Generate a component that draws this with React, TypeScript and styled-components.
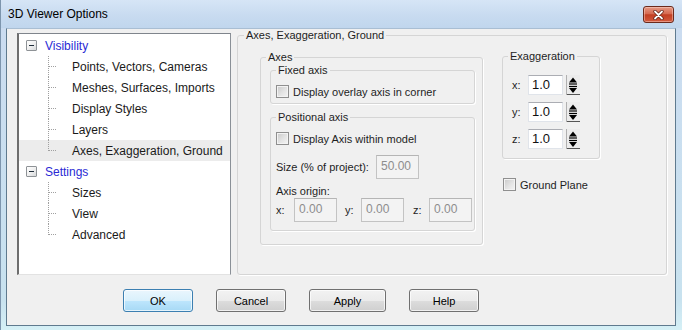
import React from 'react';
import styled, { createGlobalStyle } from 'styled-components';

const GlobalStyle = createGlobalStyle`
  html, body {
    margin: 0;
    padding: 0;
    background: #ffffff;
  }
  body {
    font-family: "Liberation Sans", Arial, sans-serif;
    color: #1e1e1e;
  }
`;

const Window = styled.div`
  width: 682px;
  height: 330px;
  box-sizing: border-box;
  display: flex;
  flex-direction: column;
  overflow: hidden;
  background: linear-gradient(180deg, #c3d7ee 0px, #cbdcf0 28px, #c8e2ef 300px, #d5f0f6 330px);
  border-left: 1px solid #7d95ad;
`;

const TitleBar = styled.div`
  height: 28px;
  flex: none;
  display: flex;
  align-items: flex-start;
  justify-content: space-between;
  padding: 0 8px 0 7px;
  background: linear-gradient(180deg, #d6e5f6 0%, #c8dbf0 55%, #c0d6ed 100%);
`;

const Title = styled.div`
  font-size: 12px;
  line-height: 14px;
  margin-top: 7px;
  color: #000;
`;

const CloseButton = styled.div`
  width: 31px;
  height: 17px;
  margin-top: 6px;
  box-sizing: border-box;
  border: 1px solid #6b2a1c;
  border-radius: 3px;
  display: flex;
  align-items: center;
  justify-content: center;
  background: linear-gradient(180deg, #e59a85 0%, #d66a51 45%, #c23f23 52%, #d35a3e 100%);
  box-shadow: inset 0 0 0 1px rgba(255, 220, 210, 0.45);
`;

const Client = styled.div`
  margin-left: 5px;
  width: 670px;
  height: 298px;
  box-sizing: border-box;
  background: #f0f0f0;
  border: 1px solid #5f7a8e;
  border-top: 1px solid #a9bed3;
  display: flex;
  flex-direction: column;
  padding: 0 0 0 10px;
`;

const Main = styled.div`
  display: flex;
  align-items: flex-start;
  gap: 6px;
`;

const Tree = styled.div`
  width: 214px;
  height: 242px;
  margin-top: 4px;
  box-sizing: border-box;
  background: #ffffff;
  border-top: 1px solid #7f858c;
  border-left: 2px solid #6e6e6e;
  border-right: 1px solid #8a9097;
  border-bottom: 1px solid #e2e2e2;
  padding-top: 1px;
  font-size: 12px;
`;

const TreeRow = styled.div<{ $child?: boolean; $selected?: boolean }>`
  height: 21px;
  display: flex;
  align-items: center;
  padding-left: ${(p) => (p.$child ? 25 : 7)}px;
  background: ${(p) => (p.$selected ? '#ececec' : 'transparent')};
`;

const ExpandBox = styled.div`
  width: 11px;
  height: 11px;
  box-sizing: border-box;
  border: 1px solid #8e9296;
  border-radius: 1px;
  background: linear-gradient(135deg, #ffffff 0%, #f0f0f0 50%, #d6d8da 100%);
  display: flex;
  align-items: center;
  justify-content: center;
  &::after {
    content: '';
    width: 5px;
    height: 1px;
    background: #1f2d3a;
  }
`;

const TreeLabel = styled.span<{ $parent?: boolean }>`
  margin-left: ${(p) => (p.$parent ? 8 : 16)}px;
  color: ${(p) => (p.$parent ? '#2a2ad4' : '#1a1a1a')};
  white-space: nowrap;
`;

const Group = styled.fieldset<{ $w: number; $h: number }>`
  margin: 0;
  padding: 0;
  min-width: 0;
  width: ${(p) => p.$w}px;
  height: ${(p) => p.$h}px;
  box-sizing: border-box;
  border: 1px solid #d5d5d5;
  border-radius: 3px;
  box-shadow: 1px 1px 0 #ffffff;
  font-size: 11px;
`;

const Legend = styled.legend<{ $x: number }>`
  margin-left: ${(p) => p.$x}px;
  padding: 0 2px;
  line-height: 13px;
  font-size: 11px;
  color: #1e1e1e;
`;

const GroupBody = styled.div<{ $pad: string }>`
  padding: ${(p) => p.$pad};
  display: flex;
  flex-direction: column;
`;

const PanelRow = styled.div`
  display: flex;
  align-items: flex-start;
`;

const RightColumn = styled.div`
  margin-left: 19px;
  margin-top: -1px;
  display: flex;
  flex-direction: column;
`;

const CheckRow = styled.label<{ $mt?: number; $ml?: number }>`
  display: flex;
  align-items: center;
  height: 13px;
  margin-top: ${(p) => p.$mt ?? 0}px;
  margin-left: ${(p) => p.$ml ?? 0}px;
  font-size: 11px;
  color: #1e1e1e;
`;

const CheckBox = styled.span`
  width: 13px;
  height: 13px;
  flex: none;
  box-sizing: border-box;
  border: 1px solid #8f8f8f;
  background: linear-gradient(135deg, #c9c9c9 0%, #e4e4e4 55%, #f4f4f4 100%);
  box-shadow: inset 0 0 0 1px #f3f3f3;
  margin-right: 4px;
`;

const FieldRow = styled.div<{ $mt?: number }>`
  display: flex;
  align-items: center;
  margin-top: ${(p) => p.$mt ?? 0}px;
`;

const FieldLabel = styled.span<{ $w?: number }>`
  width: ${(p) => (p.$w ? `${p.$w}px` : 'auto')};
  flex: none;
  font-size: 11px;
  line-height: 14px;
  color: #1e1e1e;
  white-space: nowrap;
`;

const DisabledInput = styled.div<{ $mr?: number }>`
  width: 43px;
  height: 24px;
  flex: none;
  box-sizing: border-box;
  margin-right: ${(p) => p.$mr ?? 0}px;
  border: 1px solid #c3c3c3;
  border-top-color: #b5b5b5;
  background: #f3f3f3;
  color: #8d8d8d;
  font-size: 12px;
  line-height: 14px;
  padding: 3px 0 0 4px;
`;

const SpinRow = styled.div<{ $mt?: number }>`
  display: flex;
  align-items: center;
  height: 20px;
  margin-top: ${(p) => p.$mt ?? 0}px;
`;

const SpinInput = styled.div`
  width: 35px;
  height: 20px;
  box-sizing: border-box;
  border: 1px solid #e0e4ea;
  border-top-color: #abadb3;
  background: #ffffff;
  color: #111;
  font-size: 13px;
  line-height: 18px;
  padding-left: 3px;
  margin-right: 3px;
`;

const ButtonRow = styled.div`
  display: flex;
  gap: 23px;
  margin-top: 14px;
  margin-left: 106px;
`;

const Button = styled.button<{ $w: number; $default?: boolean }>`
  width: ${(p) => p.$w}px;
  height: 23px;
  box-sizing: border-box;
  padding: 0;
  font-family: "Liberation Sans", Arial, sans-serif;
  font-size: 11px;
  color: #000;
  border-radius: 3px;
  border: 1px solid ${(p) => (p.$default ? '#3c7fb1' : '#707070')};
  background: ${(p) =>
    p.$default
      ? 'linear-gradient(180deg, #eaf6fd 0%, #d9f0fc 50%, #bee6fd 51%, #a7d9f5 100%)'
      : 'linear-gradient(180deg, #f2f2f2 0%, #ebebeb 50%, #dddddd 51%, #cfcfcf 100%)'};
  box-shadow: inset 0 0 0 1px rgba(255, 255, 255, 0.7);
`;

function Connector({ last }: { last?: boolean }) {
  return (
    <svg width="12" height="21" viewBox="0 0 12 21" style={{ flex: 'none' }}>
      <line
        x1="4.5"
        y1="0"
        x2="4.5"
        y2={last ? 11 : 21}
        stroke="#a0a0a0"
        strokeWidth="1"
        strokeDasharray="1 1"
      />
      <line x1="5" y1="10.5" x2="12" y2="10.5" stroke="#a0a0a0" strokeWidth="1" strokeDasharray="1 1" />
    </svg>
  );
}

function Spinner() {
  return (
    <svg width="14" height="20" viewBox="0 0 14 20">
      <rect x="0" y="0" width="14" height="20" fill="#ececec" />
      <line x1="0.5" y1="0" x2="0.5" y2="20" stroke="#b0b0b0" />
      <polygon points="3,7.5 7,2.5 11,7.5" fill="#000" />
      <line x1="3" y1="9" x2="11" y2="9" stroke="#000" strokeWidth="1.2" />
      <line x1="3" y1="11.5" x2="11" y2="11.5" stroke="#000" strokeWidth="1.2" />
      <polygon points="3,13 7,18 11,13" fill="#000" />
      <line x1="1" y1="19.5" x2="14" y2="19.5" stroke="#555" />
    </svg>
  );
}

const visibilityItems = [
  'Points, Vectors, Cameras',
  'Meshes, Surfaces, Imports',
  'Display Styles',
  'Layers',
  'Axes, Exaggeration, Ground',
];
const settingsItems = ['Sizes', 'View', 'Advanced'];

export default function App() {
  return (
    <>
      <GlobalStyle />
      <Window>
        <TitleBar>
          <Title>3D Viewer Options</Title>
          <CloseButton>
            <svg width="11" height="10" viewBox="0 0 11 10">
              <path d="M2 1.5 L9 8.5 M9 1.5 L2 8.5" stroke="#5a1c10" strokeWidth="3.2" strokeLinecap="round" />
              <path d="M2 1.5 L9 8.5 M9 1.5 L2 8.5" stroke="#ffffff" strokeWidth="1.8" strokeLinecap="round" />
            </svg>
          </CloseButton>
        </TitleBar>
        <Client>
          <Main>
            <Tree>
              <TreeRow>
                <ExpandBox />
                <TreeLabel $parent>Visibility</TreeLabel>
              </TreeRow>
              {visibilityItems.map((item, i) => (
                <TreeRow key={item} $child $selected={item === 'Axes, Exaggeration, Ground'}>
                  <Connector last={i === visibilityItems.length - 1} />
                  <TreeLabel>{item}</TreeLabel>
                </TreeRow>
              ))}
              <TreeRow>
                <ExpandBox />
                <TreeLabel $parent>Settings</TreeLabel>
              </TreeRow>
              {settingsItems.map((item, i) => (
                <TreeRow key={item} $child>
                  <Connector last={i === settingsItems.length - 1} />
                  <TreeLabel>{item}</TreeLabel>
                </TreeRow>
              ))}
            </Tree>

            <Group $w={430} $h={246}>
              <Legend $x={6}>Axes, Exaggeration, Ground</Legend>
              <GroupBody $pad="9px 0 0 22px">
                <PanelRow>
                  <Group $w={223} $h={194}>
                    <Legend $x={5}>Axes</Legend>
                    <GroupBody $pad="0 7px 0 9px">
                      <Group $w={205} $h={40}>
                        <Legend $x={5}>Fixed axis</Legend>
                        <GroupBody $pad="8px 0 0 5px">
                          <CheckRow>
                            <CheckBox />
                            Display overlay axis in corner
                          </CheckRow>
                        </GroupBody>
                      </Group>
                      <div style={{ height: 7 }} />
                      <Group $w={205} $h={120}>
                        <Legend $x={5}>Positional axis</Legend>
                        <GroupBody $pad="8px 0 0 5px">
                          <CheckRow>
                            <CheckBox />
                            Display Axis within model
                          </CheckRow>
                          <FieldRow $mt={10}>
                            <FieldLabel $w={100}>Size (% of project):</FieldLabel>
                            <DisabledInput>50.00</DisabledInput>
                          </FieldRow>
                          <FieldRow $mt={5}>
                            <FieldLabel>Axis origin:</FieldLabel>
                          </FieldRow>
                          <FieldRow>
                            <FieldLabel $w={18}>x:</FieldLabel>
                            <DisabledInput $mr={8}>0.00</DisabledInput>
                            <FieldLabel $w={16}>y:</FieldLabel>
                            <DisabledInput $mr={9}>0.00</DisabledInput>
                            <FieldLabel $w={16}>z:</FieldLabel>
                            <DisabledInput>0.00</DisabledInput>
                          </FieldRow>
                        </GroupBody>
                      </Group>
                    </GroupBody>
                  </Group>

                  <RightColumn>
                    <Group $w={98} $h={109}>
                      <Legend $x={5}>Exaggeration</Legend>
                      <GroupBody $pad="12px 0 0 9px">
                        {['x:', 'y:', 'z:'].map((axis, i) => (
                          <SpinRow key={axis} $mt={i === 0 ? 0 : 7}>
                            <FieldLabel $w={16}>{axis}</FieldLabel>
                            <SpinInput>1.0</SpinInput>
                            <Spinner />
                          </SpinRow>
                        ))}
                      </GroupBody>
                    </Group>
                    <CheckRow $mt={19} $ml={1}>
                      <CheckBox />
                      Ground Plane
                    </CheckRow>
                  </RightColumn>
                </PanelRow>
              </GroupBody>
            </Group>
          </Main>

          <ButtonRow>
            <Button $w={70} $default>
              OK
            </Button>
            <Button $w={70}>Cancel</Button>
            <Button $w={77}>Apply</Button>
            <Button $w={70}>Help</Button>
          </ButtonRow>
        </Client>
      </Window>
    </>
  );
}
